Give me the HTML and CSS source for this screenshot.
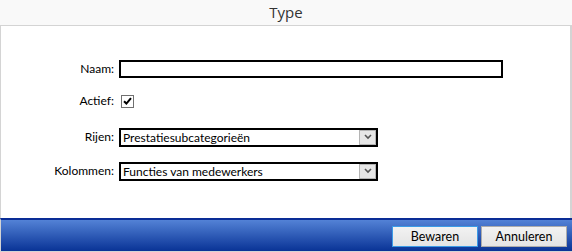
FILE: index.html
```html
<!DOCTYPE html>
<html lang="nl">
<head>
    <meta charset="UTF-8">
    <title>Type</title>
    <link rel="stylesheet" href="styles.css">
</head>
<body>
    <div class="dialog">
        <div class="dialog-header">Type</div>

        <div class="dialog-body">
            <div class="form">
                <label class="form-label">Naam:</label>
                <div class="form-field"><input type="text" class="text-input"></div>

                <label class="form-label">Actief:</label>
                <div class="form-field">
                    <span class="checkbox">
                        <svg viewBox="0 0 12 12" width="12" height="12">
                            <path d="M2.2 6.2 L4.8 8.8 L9.8 2.8" fill="none" stroke="#000" stroke-width="2.2" />
                        </svg>
                    </span>
                </div>

                <label class="form-label">Rijen:</label>
                <div class="form-field">
                    <div class="select">
                        <span class="select-value">Prestatiesubcategorieën</span>
                        <span class="select-btn">
                            <svg viewBox="0 0 8 6" width="8" height="6">
                                <path d="M1 1 L4 4 L7 1" fill="none" stroke="#555" stroke-width="1.6" />
                            </svg>
                        </span>
                    </div>
                </div>

                <label class="form-label">Kolommen:</label>
                <div class="form-field">
                    <div class="select">
                        <span class="select-value">Functies van medewerkers</span>
                        <span class="select-btn">
                            <svg viewBox="0 0 8 6" width="8" height="6">
                                <path d="M1 1 L4 4 L7 1" fill="none" stroke="#555" stroke-width="1.6" />
                            </svg>
                        </span>
                    </div>
                </div>
            </div>
        </div>

        <div class="dialog-footer">
            <button class="btn btn-primary">Bewaren</button>
            <button class="btn">Annuleren</button>
        </div>
    </div>
</body>
</html>
```

FILE: styles.css
```css
* {
    margin: 0;
    padding: 0;
    box-sizing: border-box;
}

body {
    font-family: Lato, "Open Sans", Arial, sans-serif;
    font-size: 12px;
    color: #000;
    background-color: #fff;
}

.dialog {
    width: 572px;
    height: 252px;
    display: flex;
    flex-direction: column;
}

.dialog-header {
    height: 26px;
    background-color: #f9f9f9;
    border-bottom: 1px solid #d4d4d4;
    text-align: center;
    font-family: "Open Sans", Arial, sans-serif;
    font-size: 15px;
    line-height: 24px;
    color: #333;
}

.dialog-body {
    flex: 1;
    border-left: 1px solid #d4d4d4;
    border-right: 2px solid #d4d4d4;
    padding-top: 27px;
}

.form {
    display: grid;
    grid-template-columns: 113px auto;
    grid-template-rows: 32px 32px 40px 28px;
    column-gap: 5px;
    align-items: center;
}

.form-label {
    text-align: right;
    line-height: 18px;
}

.form-field {
    display: flex;
    align-items: center;
    height: 18px;
}

.text-input {
    width: 384px;
    height: 18px;
    border: 2px solid #000;
    outline: none;
    background: #fff;
}

.checkbox {
    display: inline-flex;
    align-items: center;
    justify-content: center;
    width: 13px;
    height: 13px;
    margin-left: 2px;
    border: 1px solid #707070;
    background: #fff;
}

.select {
    width: 259px;
    height: 19px;
    border: 2px solid #000;
    display: flex;
    align-items: center;
    background: #fff;
}

.select-value {
    flex: 1;
    padding-left: 2px;
    line-height: 15px;
}

.select-btn {
    width: 17px;
    height: 15px;
    background: #e6e6e6;
    border: 1px solid #b4b4b4;
    display: flex;
    align-items: center;
    justify-content: center;
}

.dialog-footer {
    height: 34px;
    border-top: 2px solid #0a2d96;
    border-bottom: 1px solid #d4d4d4;
    border-left: 1px solid #d4d4d4;
    background: linear-gradient(to bottom, #5382d6, #093396);
    display: flex;
    justify-content: flex-end;
    align-items: center;
    gap: 3px;
    padding-right: 5px;
    padding-top: 2px;
}

.btn {
    width: 86px;
    height: 21px;
    font-family: inherit;
    font-size: 12.5px;
    color: #000;
    background: linear-gradient(to bottom, #f2f2f2, #e4e4e4);
    border: 1px solid #acacac;
}

.btn-primary {
    border-color: #3c9be6;
}
```
